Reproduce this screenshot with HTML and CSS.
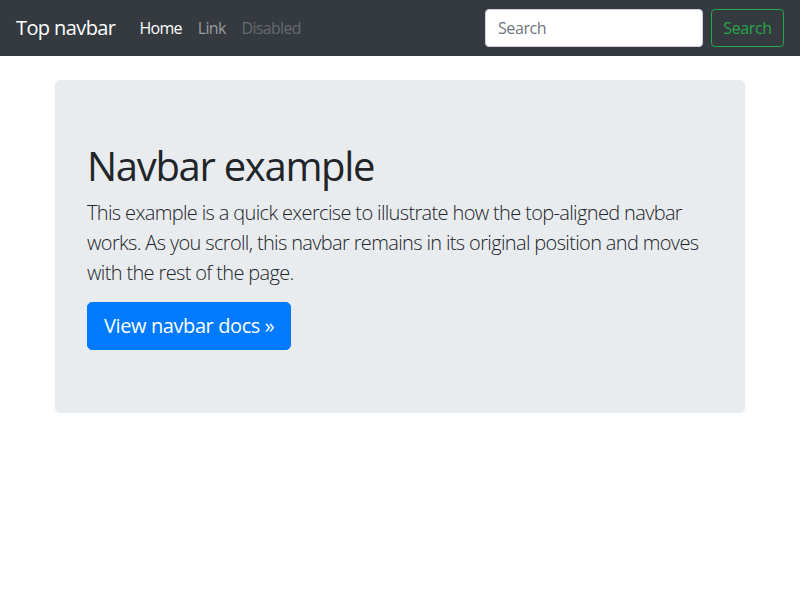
FILE: index.html
```html
<!DOCTYPE html>
<html lang="en">
<head>
<meta charset="utf-8">
<title>Top navbar example</title>
<link rel="stylesheet" href="styles.css">
</head>
<body>
<nav class="navbar">
  <a class="brand" href="#">Top navbar</a>
  <ul class="nav">
    <li><a class="nav-link active" href="#">Home</a></li>
    <li><a class="nav-link" href="#">Link</a></li>
    <li><a class="nav-link disabled" href="#">Disabled</a></li>
  </ul>
  <form class="search-form">
    <input class="search-input" type="text" placeholder="Search" aria-label="Search">
    <button class="search-btn" type="submit">Search</button>
  </form>
</nav>
<main class="container">
  <div class="jumbotron">
    <h1 class="title">Navbar example</h1>
    <p class="lead">This example is a quick exercise to illustrate how the top-aligned navbar works. As you scroll, this navbar remains in its original position and moves with the rest of the page.</p>
    <a class="btn-primary" href="#" role="button">View navbar docs &raquo;</a>
  </div>
</main>
</body>
</html>
```
FILE: styles.css
```css
* { box-sizing: border-box; }
html, body { margin: 0; padding: 0; }
body {
  font-family: "Open Sans", "Noto Sans", sans-serif;
  font-size: 16px;
  line-height: 1.5;
  color: #212529;
  background: #fff;
}
a { text-decoration: none; }

.navbar {
  height: 56px;
  background: #343a40;
  display: flex;
  align-items: center;
  padding: 0 16px;
  margin-bottom: 24px;
}
.brand {
  color: #fff;
  font-size: 20px;
  line-height: 30px;
  margin-right: 16px;
  letter-spacing: -0.6px;
}
.nav {
  list-style: none;
  display: flex;
  margin: 0;
  padding: 0;
  flex: 1;
}
.nav-link {
  display: block;
  padding: 8px 8px;
  color: rgba(255,255,255,0.5);
  font-size: 16px;
  line-height: 24px;
  letter-spacing: -0.7px;
}
.nav-link.active { color: #fff; }
.nav-link.disabled { color: rgba(255,255,255,0.25); }

.search-form {
  display: flex;
  align-items: center;
}
.search-input {
  width: 218px;
  height: 38px;
  padding: 6px 12px;
  font-family: inherit;
  font-size: 16px;
  border: 1px solid #ced4da;
  border-radius: 4px;
  background: #fff;
  color: #495057;
  margin-right: 8px;
  letter-spacing: -0.4px;
}
.search-input::placeholder { color: #6c757d; }
.search-btn {
  height: 38px;
  width: 73px;
  padding: 6px 0;
  font-family: inherit;
  font-size: 16px;
  background: transparent;
  color: #28a745;
  border: 1px solid #28a745;
  border-radius: 4px;
  letter-spacing: -0.4px;
}

.container {
  max-width: 720px;
  margin: 0 auto;
  padding: 0 15px;
}
.jumbotron {
  background: #e9ecef;
  border-radius: 5px;
  padding: 62px 32px 63px;
}
.title {
  margin: 0 0 8px;
  font-size: 40px;
  line-height: 48px;
  font-weight: 400;
  letter-spacing: -1.3px;
}
.lead {
  margin: 0 0 14px;
  font-size: 20px;
  line-height: 30px;
  font-weight: 300;
  letter-spacing: -0.65px;
}
.btn-primary {
  display: inline-block;
  background: #007bff;
  color: #fff;
  font-size: 20px;
  line-height: 30px;
  padding: 8px 16px;
  border: 1px solid #007bff;
  border-radius: 5px;
  letter-spacing: -0.4px;
}
```
